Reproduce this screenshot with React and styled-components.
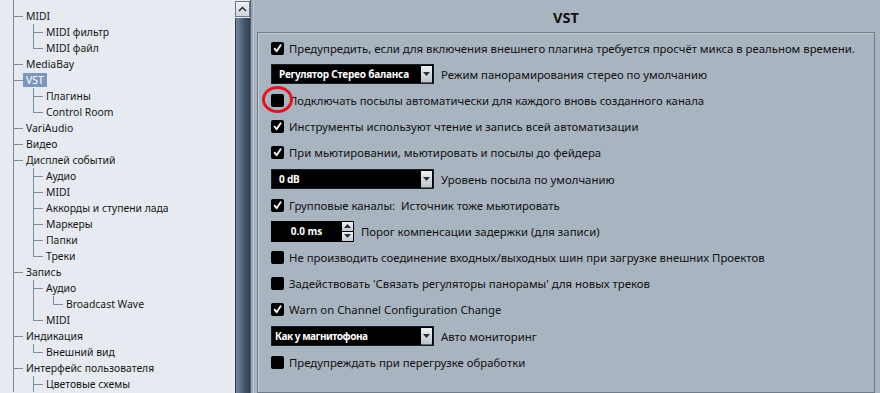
import React from 'react';
import styled, { createGlobalStyle } from 'styled-components';

const GlobalStyle = createGlobalStyle`
  html, body {
    margin: 0;
    padding: 0;
    height: 100%;
    overflow: hidden;
  }
  body {
    font-family: "Noto Sans", "Open Sans", sans-serif;
  }
  #root {
    height: 100%;
  }
`;

const Window = styled.div`
  display: flex;
  width: 880px;
  height: 393px;
  overflow: hidden;
`;

/* ---------- left tree ---------- */

const TreePane = styled.div`
  width: 235px;
  flex-shrink: 0;
  background: #e6ebf1;
  overflow: hidden;
  font-size: 10.4px;
  color: #151515;
`;

const TreeRow = styled.div`
  display: flex;
  align-items: center;
  height: ${props => props.$h || 16}px;
  white-space: nowrap;
`;

const Guides = styled.svg`
  flex-shrink: 0;
  display: block;
`;

const TreeLabel = styled.span`
  padding: 0 3px;
  line-height: 14px;
  ${props => props.$selected && `
    background: #7b97bd;
    color: #fff;
  `}
`;

const ScrollBar = styled.div`
  width: 15px;
  flex-shrink: 0;
  display: flex;
  flex-direction: column;
  background: #e6ebf1;
`;

const ScrollButton = styled.div`
  height: 16px;
  margin-top: 1px;
  box-sizing: border-box;
  border: 1px solid #6f7a86;
  background: linear-gradient(#eef1f4, #cfd6dd);
  display: flex;
  align-items: center;
  justify-content: center;
`;

const ScrollThumb = styled.div`
  flex: 1;
  margin-top: 1px;
  border-left: 1px solid #2e3c4d;
  border-right: 1px solid #2e3c4d;
  background: linear-gradient(to right, #7286a0 0%, #5a6e86 35%, #3f5269 70%, #33445a 100%);
`;

/* ---------- right panel ---------- */

const SettingsPane = styled.div`
  flex: 1;
  display: flex;
  flex-direction: column;
  background: #a8b4c0;
  border-left: 1px solid #55616e;
  box-shadow: inset 2px 0 0 #9aa6b2, inset 3px 0 0 #c1cad3;
  padding: 0 5px 0 6px;
  font-size: 11.35px;
  color: #111;
`;

const Title = styled.div`
  height: 32px;
  display: flex;
  align-items: center;
  justify-content: center;
  font-weight: 700;
  font-size: 14.5px;
  padding-top: 2px;
  box-sizing: border-box;
`;

const GroupBox = styled.div`
  flex: 1;
  border: 1px solid #6f7b87;
  box-shadow: inset 1px 1px 0 #c2cad3;
  padding: 2px 13px 0 13px;
  display: flex;
  flex-direction: column;
`;

const OptionRow = styled.div`
  position: relative;
  height: 26.2px;
  flex-shrink: 0;
  display: flex;
  align-items: center;
  gap: ${props => props.$gap || 5}px;
  white-space: pre;
`;

const CheckBox = styled.span`
  width: 13px;
  height: 13px;
  border-radius: 2px;
  background: #000;
  flex-shrink: 0;
  display: flex;
  align-items: center;
  justify-content: center;
`;

const Select = styled.div`
  width: 163px;
  height: 20px;
  box-sizing: border-box;
  background: #000;
  border: 1px solid #1a1f25;
  display: flex;
  align-items: center;
  justify-content: space-between;
  padding-left: ${props => props.$pad}px;
  color: #fff;
  font-weight: 700;
  font-size: 10px;
  letter-spacing: ${props => props.$tight ? '-0.45px' : '-0.2px'};
  flex-shrink: 0;
`;

const SelectArrow = styled.span`
  width: 11px;
  height: 17px;
  margin-right: 1px;
  background: linear-gradient(#eef1f4, #bcc4cc);
  border-bottom: 1px solid #5a6470;
  box-sizing: border-box;
  display: flex;
  align-items: center;
  justify-content: center;
`;

const Spin = styled.div`
  width: 83px;
  height: 21px;
  box-sizing: border-box;
  background: #000;
  display: flex;
  align-items: stretch;
  flex-shrink: 0;
`;

const SpinValue = styled.span`
  flex: 1;
  display: flex;
  align-items: center;
  justify-content: center;
  color: #fff;
  font-weight: 700;
  font-size: 10px;
`;

const SpinButtons = styled.span`
  width: 11px;
  margin: 1px 1px 1px 0;
  display: flex;
  flex-direction: column;
  gap: 1px;
`;

const SpinButton = styled.span`
  flex: 1;
  background: linear-gradient(#eef1f4, #c3cad1);
  display: flex;
  align-items: center;
  justify-content: center;
`;

const Highlight = styled.span`
  position: absolute;
  left: -9px;
  top: -1px;
  width: 31px;
  height: 27px;
  box-sizing: border-box;
  border: 3.5px solid #e2151f;
  border-radius: 50%;
  pointer-events: none;
`;

/* ---------- data ---------- */

const treeItems = [
  { label: 'MIDI', level: 0 },
  { label: 'MIDI фильтр', level: 1 },
  { label: 'MIDI файл', level: 1 },
  { label: 'MediaBay', level: 0 },
  { label: 'VST', level: 0, selected: true },
  { label: 'Плагины', level: 1 },
  { label: 'Control Room', level: 1 },
  { label: 'VariAudio', level: 0 },
  { label: 'Видео', level: 0 },
  { label: 'Дисплей событий', level: 0 },
  { label: 'Аудио', level: 1 },
  { label: 'MIDI', level: 1 },
  { label: 'Аккорды и ступени лада', level: 1 },
  { label: 'Маркеры', level: 1 },
  { label: 'Папки', level: 1 },
  { label: 'Треки', level: 1 },
  { label: 'Запись', level: 0 },
  { label: 'Аудио', level: 1 },
  { label: 'Broadcast Wave', level: 2 },
  { label: 'MIDI', level: 1 },
  { label: 'Индикация', level: 0 },
  { label: 'Внешний вид', level: 1 },
  { label: 'Интерфейс пользователя', level: 0 },
  { label: 'Цветовые схемы', level: 1, more: true },
];

// an item is the last of its siblings when no later sibling comes before the parent's level ends
const isLast = (i) => {
  const { level, more } = treeItems[i];
  if (level === 0 || more) return false;
  for (let j = i + 1; j < treeItems.length; j++) {
    if (treeItems[j].level < level) return true;
    if (treeItems[j].level === level) return false;
  }
  return false;
};

const ancestorContinues = (i, a) => {
  for (let j = i - 1; j >= 0; j--) {
    if (treeItems[j].level === a) return !isLast(j);
  }
  return true;
};

const LINE = '#838b94';

const TreeGuides = ({ index, level }) => {
  const w = 23 + level * 20;
  const last = isLast(index);
  const lines = [];
  for (let a = 0; a < level; a++) {
    if (ancestorContinues(index, a)) {
      const x = 13 + a * 20 + 0.5;
      lines.push(<line key={'a' + a} x1={x} y1={0} x2={x} y2={16} />);
    }
  }
  const x = 13 + level * 20 + 0.5;
  lines.push(<line key="v" x1={x} y1={0} x2={x} y2={last ? 8.5 : 16} />);
  lines.push(<line key="h" x1={x} y1={8.5} x2={x + 10} y2={8.5} />);
  return (
    <Guides width={w} height={16} stroke={LINE} strokeWidth={1} shapeRendering="crispEdges">
      {lines}
    </Guides>
  );
};

const CheckMark = () => (
  <svg width="9" height="9" viewBox="0 0 9 9">
    <polyline points="1.6,4.6 3.6,7.2 7.6,1.2" fill="none" stroke="#fff" strokeWidth="1.8" strokeLinecap="round" strokeLinejoin="round" />
  </svg>
);

const DownTriangle = () => (
  <svg width="7" height="4" viewBox="0 0 7 4">
    <polygon points="0,0 7,0 3.5,4" fill="#2a2f36" />
  </svg>
);

const UpTriangle = () => (
  <svg width="7" height="4" viewBox="0 0 7 4">
    <polygon points="0,4 7,4 3.5,0" fill="#2a2f36" />
  </svg>
);

const Check = ({ checked, label, marked }) => (
  <OptionRow>
    <CheckBox>{checked && <CheckMark />}</CheckBox>
    {marked && <Highlight />}
    <span>{label}</span>
  </OptionRow>
);

const Dropdown = ({ value, label, pad = 7, tight }) => (
  <OptionRow $gap={7}>
    <Select $pad={pad} $tight={tight}>
      <span>{value}</span>
      <SelectArrow><DownTriangle /></SelectArrow>
    </Select>
    <span>{label}</span>
  </OptionRow>
);

const App = () => {
  return (
    <>
      <GlobalStyle />
      <Window>
        <TreePane>
          <TreeRow $h={8}>
            <Guides width={23} height={8} stroke={LINE} shapeRendering="crispEdges">
              <line x1={13.5} y1={0} x2={13.5} y2={8} />
            </Guides>
          </TreeRow>
          {treeItems.map((item, i) => (
            <TreeRow key={i}>
              <TreeGuides index={i} level={item.level} />
              <TreeLabel $selected={item.selected}>{item.label}</TreeLabel>
            </TreeRow>
          ))}
        </TreePane>
        <ScrollBar>
          <ScrollButton>
            <svg width="9" height="6" viewBox="0 0 9 6">
              <polyline points="1,5 4.5,1.5 8,5" fill="none" stroke="#1e2329" strokeWidth="1.4" />
            </svg>
          </ScrollButton>
          <ScrollThumb />
        </ScrollBar>
        <SettingsPane>
          <Title>VST</Title>
          <GroupBox>
            <Check checked label="Предупредить, если для включения внешнего плагина требуется просчёт микса в реальном времени." />
            <Dropdown value="Регулятор Стерео баланса" label="Режим панорамирования стерео по умолчанию" />
            <Check marked label="Подключать посылы автоматически для каждого вновь созданного канала" />
            <Check checked label="Инструменты используют чтение и запись всей автоматизации" />
            <Check checked label="При мьютировании, мьютировать и посылы до фейдера" />
            <Dropdown value="0 dB" label="Уровень посыла по умолчанию" />
            <Check checked label="Групповые каналы:  Источник тоже мьютировать" />
            <OptionRow $gap={7}>
              <Spin>
                <SpinValue>0.0 ms</SpinValue>
                <SpinButtons>
                  <SpinButton><UpTriangle /></SpinButton>
                  <SpinButton><DownTriangle /></SpinButton>
                </SpinButtons>
              </Spin>
              <span>Порог компенсации задержки (для записи)</span>
            </OptionRow>
            <Check label="Не производить соединение входных/выходных шин при загрузке внешних Проектов" />
            <Check label="Задействовать 'Связать регуляторы панорамы' для новых треков" />
            <Check checked label="Warn on Channel Configuration Change" />
            <Dropdown value="Как у магнитофона" label="Авто мониторинг" pad={3} tight />
            <Check label="Предупреждать при перегрузке обработки" />
          </GroupBox>
        </SettingsPane>
      </Window>
    </>
  );
};

export default App;
